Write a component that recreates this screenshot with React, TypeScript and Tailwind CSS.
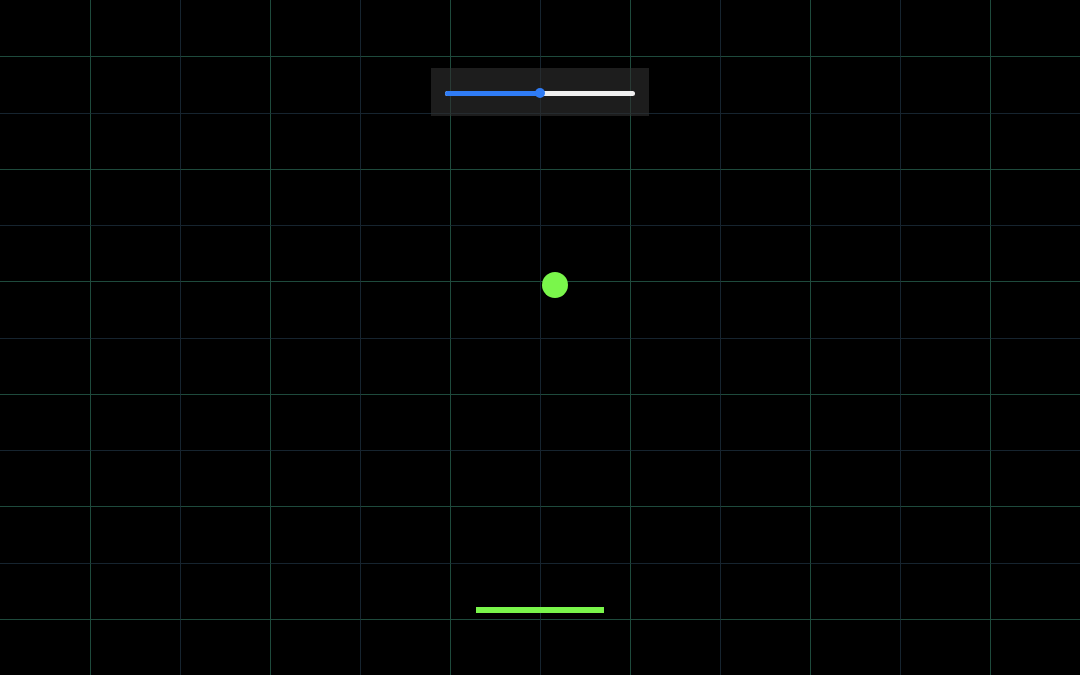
const cells = Array.from({ length: 144 }, (_, i) => i);

function cellClass(i: number) {
  const col = i % 12;
  const row = Math.floor(i / 12);
  const left = col === 0 ? "" : col % 2 ? "border-l border-l-[#1e4a3c]" : "border-l border-l-[#16242f]";
  const top = row === 0 ? "" : row % 2 ? "border-t border-t-[#1e4a3c]" : "border-t border-t-[#16242f]";
  return `${left} ${top}`;
}

function Grid() {
  return (
    <div className="absolute inset-0 grid grid-cols-12 grid-rows-12">
      {cells.map((i) => (
        <div key={i} className={cellClass(i)} />
      ))}
    </div>
  );
}

function SpeedSlider({ value }: { value: number }) {
  return (
    <div className="w-[218px] h-12 bg-[#303030]/60 flex items-center px-[14px] pt-[2px]">
      <div className="relative w-full h-[5px] rounded-full bg-[#efefef]">
        <div className="h-full rounded-full bg-[#2f7cf6]" style={{ width: `${value}%` }} />
        <div
          className="absolute top-1/2 w-[10px] h-[10px] -translate-x-1/2 -translate-y-1/2 rounded-full bg-[#2f7cf6]"
          style={{ left: `${value}%` }}
        />
      </div>
    </div>
  );
}

export default function App() {
  return (
    <div className="relative w-[1080px] h-[675px] bg-black overflow-hidden">
      <Grid />
      <div className="absolute inset-0 flex flex-col items-center pt-[68px]">
        <SpeedSlider value={50} />
      </div>
      {/* ball + paddle live on the game canvas */}
      <div className="absolute left-[542px] top-[272px] w-[26px] h-[26px] rounded-full bg-[#7af64b]" />
      <div className="absolute left-[476px] top-[607px] w-[128px] h-[6px] bg-[#7af64b]" />
    </div>
  );
}
